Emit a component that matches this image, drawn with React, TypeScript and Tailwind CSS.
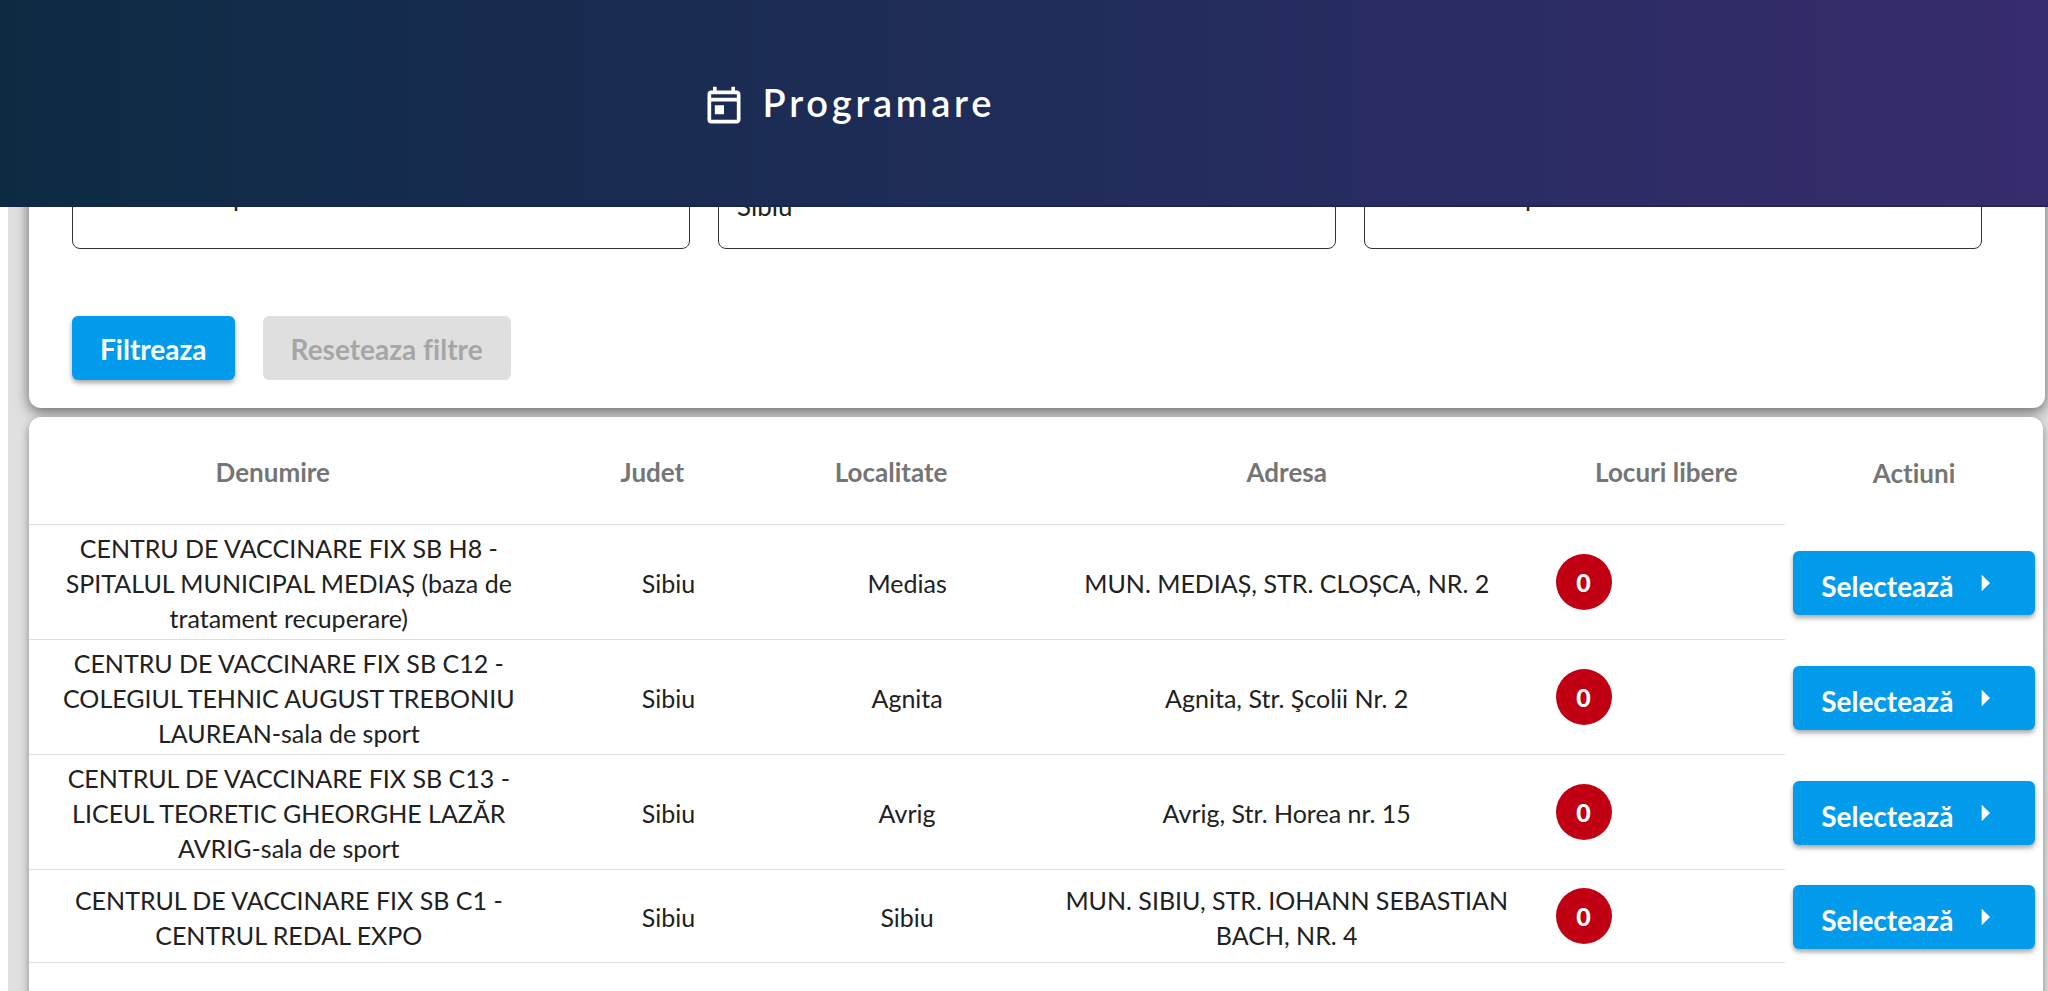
import { MdArrowRight, MdOutlineToday } from "react-icons/md";

const centers = [
  {
    name: "CENTRU DE VACCINARE FIX SB H8 - SPITALUL MUNICIPAL MEDIAȘ (baza de tratament recuperare)",
    county: "Sibiu",
    city: "Medias",
    address: "MUN. MEDIAȘ, STR. CLOȘCA, NR. 2",
    slots: 0,
  },
  {
    name: "CENTRU DE VACCINARE FIX SB C12 - COLEGIUL TEHNIC AUGUST TREBONIU LAUREAN-sala de sport",
    county: "Sibiu",
    city: "Agnita",
    address: "Agnita, Str. Şcolii Nr. 2",
    slots: 0,
  },
  {
    name: "CENTRUL DE VACCINARE FIX SB C13 - LICEUL TEORETIC GHEORGHE LAZĂR AVRIG-sala de sport",
    county: "Sibiu",
    city: "Avrig",
    address: "Avrig, Str. Horea nr. 15",
    slots: 0,
  },
  {
    name: "CENTRUL DE VACCINARE FIX SB C1 - CENTRUL REDAL EXPO",
    county: "Sibiu",
    city: "Sibiu",
    address: "MUN. SIBIU, STR. IOHANN SEBASTIAN BACH, NR. 4",
    slots: 0,
  },
];

function PageBar() {
  return (
    <header className="relative z-10 flex h-[207px] items-center border-b-2 border-[#1a2050]/60 bg-linear-to-r from-[#0c2b43] via-[#202c5a] to-[#372c6e] pl-[34.3%] text-white">
      <MdOutlineToday className="mt-2 size-11" />
      <h1 className="ml-4 text-[38px] font-semibold tracking-widest">Programare</h1>
    </header>
  );
}

function FilterCard() {
  const field = "h-[78px] w-full rounded-lg border border-[#333] px-[18px] text-[26px] text-[#212121] placeholder:text-[#212121]";

  return (
    <section className="rounded-b-xl bg-white px-[43px] pb-7 shadow-[0_4px_14px_rgba(0,0,0,0.55)]">
      <div className="-mt-9 mr-5 grid grid-cols-3 gap-7">
        <input aria-label="Judet" placeholder="Selecteaza optiunea" className={`${field} pb-7`} />
        <input aria-label="Localitate" defaultValue="Sibiu" className={`${field} pb-2`} />
        <input aria-label="Centru" placeholder="Selecteaza optiunea" className={`${field} pb-7`} />
      </div>
      <div className="mt-[67px] flex gap-7">
        <button className="h-16 rounded-md bg-[#039cec] px-7 pt-[2px] text-[28px] font-bold text-white shadow-[0_3px_5px_rgba(0,0,0,0.35)]">
          Filtreaza
        </button>
        <button disabled className="h-16 rounded-md bg-[#dfdfdf] px-7 pt-[2px] text-[28px] font-bold text-[#a6a6a6]">
          Reseteaza filtre
        </button>
      </div>
    </section>
  );
}

function CentersTable() {
  return (
    <section className="relative mr-[2px] min-h-[700px] rounded-xl bg-white shadow-[0_4px_10px_rgba(0,0,0,0.4)]">
      <table className="w-full table-fixed border-separate border-spacing-0 text-center text-[25px] leading-[35px] text-[#212121]">
        <colgroup>
          <col className="w-[25.8%]" />
          <col className="w-[11.9%]" />
          <col className="w-[11.8%]" />
          <col className="w-[25.9%]" />
          <col className="w-[11.8%]" />
          <col className="w-[12.8%]" />
        </colgroup>
        <thead className="text-[26px] text-[#757575]">
          <tr className="h-[108px]">
            <th className="border-b border-[#e0e0e0] pt-1 pr-8 font-bold">Denumire</th>
            <th className="border-b border-[#e0e0e0] pt-1 pr-8 font-bold">Judet</th>
            <th className="border-b border-[#e0e0e0] pt-1 pr-8 font-bold">Localitate</th>
            <th className="border-b border-[#e0e0e0] pt-1 font-bold">Adresa</th>
            <th className="border-b border-[#e0e0e0] pt-1 font-bold">Locuri libere</th>
            <th className="pt-1 font-bold">Actiuni</th>
          </tr>
        </thead>
        <tbody>
          {centers.map((center) => (
            <tr key={center.name} className="h-[93px]">
              <td className="border-b border-[#e0e0e0] px-6 pt-[6px] pb-[3px]">{center.name}</td>
              <td className="border-b border-[#e0e0e0] pt-[3px]">{center.county}</td>
              <td className="border-b border-[#e0e0e0] pt-[3px]">{center.city}</td>
              <td className="border-b border-[#e0e0e0] px-6 pt-[3px]">{center.address}</td>
              <td className="border-b border-[#e0e0e0] pl-2">
                <span className="flex size-14 items-center justify-center rounded-full bg-[#c00012] font-black text-white">
                  {center.slots}
                </span>
              </td>
              <td className="px-2">
                <button className="flex h-16 w-full items-center rounded-md bg-[#039cec] pl-7 text-[28px] font-bold text-white shadow-[0_3px_5px_rgba(0,0,0,0.35)]">
                  <span className="pt-2">Selectează</span>
                  <MdArrowRight className="ml-3 size-10" />
                </button>
              </td>
            </tr>
          ))}
        </tbody>
      </table>
    </section>
  );
}

export default function App() {
  return (
    <div className="h-screen overflow-hidden bg-white font-[Lato,sans-serif] [font-variant-ligatures:no-common-ligatures]">
      <PageBar />
      <main className="ml-2 space-y-[9px] bg-[#e0e0e0] pr-[3px] pl-[21px]">
        <FilterCard />
        <CentersTable />
      </main>
    </div>
  );
}
